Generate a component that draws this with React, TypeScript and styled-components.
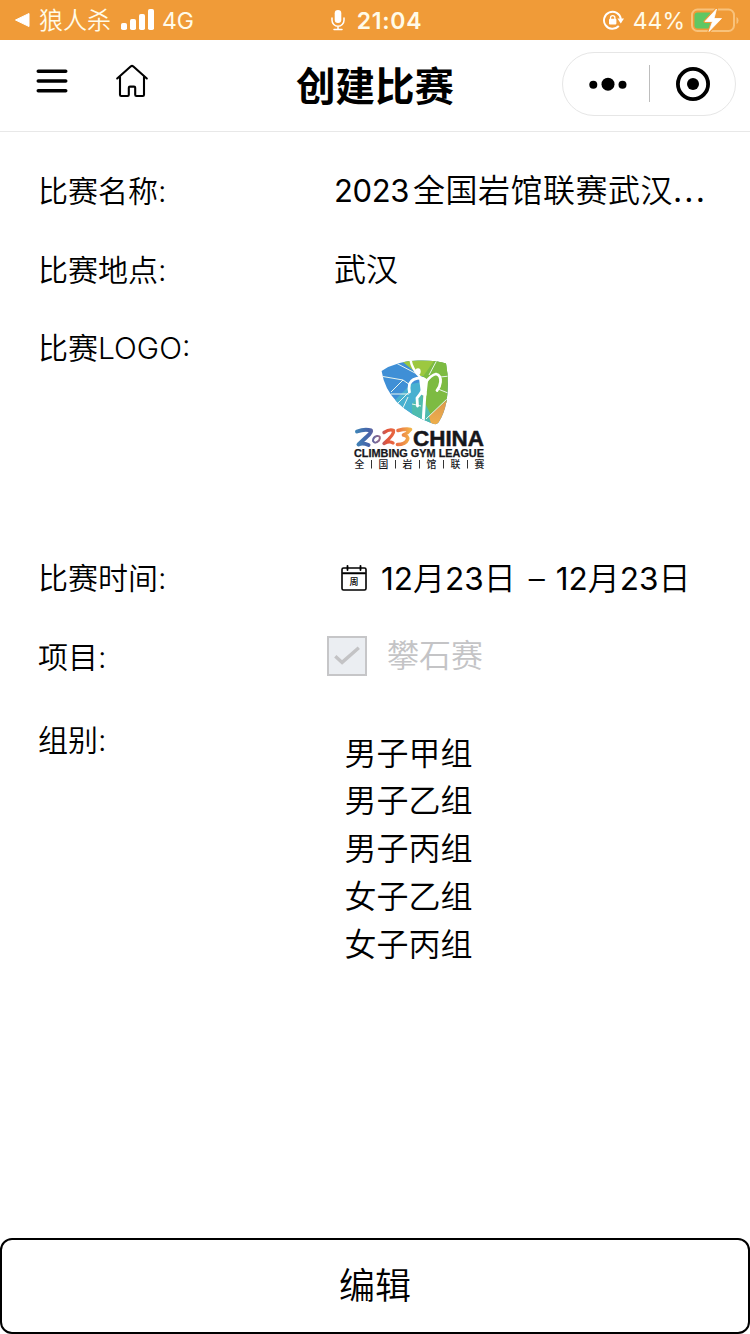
import React from 'react';
import styled, { createGlobalStyle } from 'styled-components';

const GlobalStyle = createGlobalStyle`
  * { box-sizing: border-box; }
  body {
    margin: 0;
    background: #fff;
    color: #000;
    font-family: Inter, "Noto Sans CJK SC", sans-serif;
  }
`;

const Page = styled.div`
  display: flex;
  flex-direction: column;
  width: 750px;
  height: 1334px;
  overflow: hidden;
  background: #fff;
`;

const StatusBar = styled.header`
  display: grid;
  grid-template-columns: 1fr auto 1fr;
  align-items: center;
  height: 40px;
  flex: none;
  padding: 0 11px 0 14px;
  background: #f09b38;
  color: #fff;
  font-size: 23px;
  line-height: 40px;
  white-space: nowrap;
`;

const StatusGroup = styled.div<{ $end?: boolean }>`
  display: flex;
  align-items: center;
  height: 40px;
  justify-content: ${(p) => (p.$end ? 'flex-end' : 'flex-start')};
  svg { display: block; flex: none; }
`;

const StatusText = styled.span<{ $left: number; $size?: number; $weight?: number; $spacing?: number; $drop?: number }>`
  margin-left: ${(p) => p.$left}px;
  padding-top: ${(p) => p.$drop ?? 1}px;
  font-size: ${(p) => p.$size ?? 23}px;
  font-weight: ${(p) => p.$weight ?? 400};
  letter-spacing: ${(p) => p.$spacing ?? 0}px;
  color: #fffbe9;
`;

const Signal = styled.svg`
  margin-left: 10px;
`;

const BatteryIcon = styled.svg`
  margin-left: 6px;
`;

const NavBar = styled.nav`
  display: grid;
  grid-template-columns: 1fr auto 1fr;
  align-items: center;
  flex: none;
  height: 92px;
  padding: 0 14px 4px 36px;
  border-bottom: 1px solid #e8e8e8;
`;

const NavIcons = styled.div`
  display: flex;
  align-items: center;
  gap: 47px;
  padding-bottom: 5px;
  svg { display: block; }
`;

const Title = styled.h1`
  margin: 6px 22px 0 0;
  font-size: 39.5px;
  font-weight: 700;
  line-height: 60px;
`;

const Capsule = styled.div`
  display: flex;
  align-items: center;
  justify-self: end;
  width: 174px;
  height: 64px;
  border: 1px solid #e6e6e6;
  border-radius: 32px;
`;

const CapsuleButton = styled.button<{ $shift?: number }>`
  display: flex;
  width: 86px;
  flex: none;
  align-items: center;
  justify-content: center;
  padding: 0 0 0 ${(p) => p.$shift ?? 0}px;
  border: 0;
  background: none;
`;

const CapsuleDivider = styled.span`
  flex: none;
  width: 1px;
  height: 37px;
  background: #bdbdbd;
`;

const Form = styled.main`
  display: flex;
  flex: 1;
  flex-direction: column;
  padding: 20px 0 0 38px;
`;

const Row = styled.section<{ $height: number; $line?: number }>`
  display: grid;
  grid-template-columns: 289px 1fr;
  grid-template-rows: 100%;
  height: ${(p) => p.$height}px;
  line-height: ${(p) => p.$line ?? p.$height}px;
`;

const Label = styled.span`
  font-size: 30px;
  font-weight: 350;
`;

const Value = styled.div<{ $indent?: number; $lift?: number }>`
  display: flex;
  align-items: center;
  padding: 0 0 ${(p) => p.$lift ?? 0}px ${(p) => p.$indent ?? 7}px;
  font-size: 32px;
  font-weight: 350;
  white-space: nowrap;
`;

const Digits = styled.span`
  margin-right: 4px;
  letter-spacing: -0.4px;
  font-size: 31px;
  font-weight: 400;
`;

const Name = styled.span`
  letter-spacing: 0.5px;
`;

const Ellipsis = styled.span`
  letter-spacing: 2.2px;
  font-weight: 400;
`;

const LogoBox = styled.div`
  padding: 47px 0 0 23px;
  line-height: 0;
`;

const DateText = styled.span<{ $left: number }>`
  margin-left: ${(p) => p.$left}px;
  padding-top: 1px;
`;

const DateNumber = styled.span`
  font-size: 31.5px;
  font-weight: 400;
`;

const CheckBox = styled.span`
  display: flex;
  align-items: center;
  justify-content: center;
  width: 40px;
  height: 40px;
  border: 2px solid #c6c6c8;
  background: #ebeef2;
`;

const CheckText = styled.span`
  margin-left: 20px;
  color: #c4c4c6;
`;

const Groups = styled.ul`
  margin: 0;
  padding: 32.5px 0 0 17.5px;
  list-style: none;
`;

const Group = styled.li`
  height: 47.8px;
  font-size: 32px;
  font-weight: 350;
  line-height: 48px;
`;

const EditButton = styled.button`
  flex: none;
  height: 96px;
  padding: 0;
  border: 2px solid #000;
  border-radius: 12px;
  background: #fff;
  color: #000;
  font: 350 36px/92px Inter, "Noto Sans CJK SC", sans-serif;
`;

const BackArrow = () => (
  <svg width="16" height="16" viewBox="0 0 16 16">
    <path d="M1.5 8 15 1.5v13Z" fill="#fff" stroke="#fff" strokeLinejoin="round" />
  </svg>
);

const SignalBars = () => (
  <Signal width="33" height="22" viewBox="0 0 33 22">
    <g fill="#fff">
      <rect x="0" y="14" width="6" height="7" rx="1.8" />
      <rect x="9" y="10" width="6" height="11" rx="1.8" />
      <rect x="18" y="5" width="6" height="16" rx="1.8" />
      <rect x="27" y="0" width="6" height="21" rx="1.8" />
    </g>
  </Signal>
);

const Microphone = () => (
  <svg width="14" height="22" viewBox="0 0 14 22" fill="none" stroke="#fff" strokeWidth="1.5" strokeLinecap="round">
    <rect x="3.7" y="1" width="6.6" height="13" rx="3.3" fill="#fff" stroke="none" />
    <path d="M1 9v2.3a6 6 0 0 0 12 0V9M7 17.4v3M3 20.6h8" />
  </svg>
);

const RotationLock = () => (
  <svg width="21" height="20" viewBox="0 0 21 20" fill="none" stroke="#fff" strokeWidth="1.9">
    <path d="M15.8 16A8.5 8.5 0 1 1 17.9 9" />
    <path d="M14.4 8.6h6.6l-3.2 4.8Z" fill="#fff" stroke="none" />
    <rect x="6" y="8.8" width="7.4" height="5.8" rx="1" fill="#fff" stroke="none" />
    <path d="M7.5 9.5V7.8a2.2 2.2 0 0 1 4.4 0v1.7" strokeWidth="1.3" />
  </svg>
);

const Battery = () => (
  <BatteryIcon width="48" height="26" viewBox="0 0 48 26">
    <rect x="1" y="2.5" width="42" height="21.5" rx="5.5" fill="none" stroke="#f8c27b" strokeWidth="2" />
    <path d="M45.5 10q2 .8 2 3.5t-2 3.5Z" fill="#f8c27b" />
    <path d="M6.5 5.5H19v16H6.5q-3 0-3-3v-10q0-3 3-3Z" fill="#5fc763" />
    <path d="M25.5 2 14 14.5h7.5L18 24.5 30.5 11.500H23Z" fill="#fff" stroke="#f09b38" strokeWidth="3" strokeLinejoin="round" />
    <path d="M25.5 2 14 14.5h7.5L18 24.5 30.5 11.500H23Z" fill="#fff" stroke="#fff" strokeWidth=".8" strokeLinejoin="round" />
  </BatteryIcon>
);

const MenuIcon = () => (
  <svg width="32" height="26" viewBox="0 0 32 26" stroke="#000" strokeWidth="3.6" strokeLinecap="round">
    <path d="M2.3 3.3h27.4M2.3 13h27.4M2.3 22.7h27.4" />
  </svg>
);

const HomeIcon = () => (
  <svg width="34" height="34" viewBox="0 0 34 34" fill="none" stroke="#000" strokeWidth="2.1" strokeLinecap="round" strokeLinejoin="round">
    <path d="M2.2 14.5 15.9 2.3q1.1-.8 2.2 0l13.7 12.2" />
    <path d="M5 13v17.8q0 1.2 1.2 1.2h6.4q1.2 0 1.2-1.2v-7q0-1.2 1.2-1.2h4q1.2 0 1.2 1.2v7q0 1.2 1.2 1.2h6.4q1.2 0 1.2-1.2V13" />
  </svg>
);

const MoreIcon = () => (
  <svg width="38" height="14" viewBox="0 0 38 14">
    <circle cx="4.3" cy="7.8" r="4" />
    <circle cx="19" cy="7.2" r="6.5" />
    <circle cx="33.5" cy="7.8" r="4" />
  </svg>
);

const CloseIcon = () => (
  <svg width="34" height="34" viewBox="0 0 34 34">
    <circle cx="17" cy="17" r="15.1" fill="none" stroke="#000" strokeWidth="3.8" />
    <circle cx="17" cy="17" r="6" />
  </svg>
);

const CalendarIcon = () => (
  <svg width="28" height="28" viewBox="0 0 28 28" fill="none" stroke="#000" strokeWidth="1.6" strokeLinecap="round">
    <rect x="2" y="4" width="24" height="22" rx="1.5" />
    <path d="M3 9.3h22" strokeWidth="2" />
    <path d="M7.5 1.8v4.2M20.5 1.8v4.2" strokeWidth="1.8" />
    <text x="14" y="20.6" textAnchor="middle" fontSize="9" fontWeight="500" fill="#000" stroke="none">周</text>
  </svg>
);

const CheckIcon = () => (
  <svg width="26" height="20" viewBox="0 0 26 20" fill="none" stroke="#c3c3c5" strokeWidth="3.4">
    <path d="m1.3 10.2 6.8 6.2L24.8 1.8" />
  </svg>
);

const LeagueLogo = () => (
  <svg width="140" height="118" viewBox="350 356 140 118">
    <defs>
      <clipPath id="shield">
        <path d="M381.6 371Q396 361 418 360.5q18-.5 28 3 3.500 19 .5 38-2.500 13-8 21-2 2.500-5.500 1.200Q387 407 381.600 371Z" />
      </clipPath>
      <linearGradient id="tail" x1="0" y1="0" x2="0" y2="1">
        <stop offset="0" stopColor="#d9964e" />
        <stop offset="1" stopColor="#f2b24a" />
      </linearGradient>
      <linearGradient id="year" x1="355" y1="0" x2="411" y2="0" gradientUnits="userSpaceOnUse">
        <stop offset="0" stopColor="#3f86b8" />
        <stop offset=".25" stopColor="#4763a8" />
        <stop offset=".42" stopColor="#8b6a91" />
        <stop offset=".56" stopColor="#e1543c" />
        <stop offset=".76" stopColor="#ea7044" />
        <stop offset="1" stopColor="#f3b54a" />
      </linearGradient>
    </defs>
    <g clipPath="url(#shield)">
      <path d="M380 358h70v70h-70Z" fill="#3f8fd6" />
      <path d="m398 358 52-2v24l-30-4Z" fill="#9cc840" />
      <path d="m422 378 14-20h14v42l-22 18-6-12Z" fill="#7dbb42" />
      <path d="m393 402 18-18 11-2 2 44Z" fill="#48b0d0" />
      <path d="m412 404 9-9 9 18 1 12-19-6Z" fill="#4fbcae" />
      <path d="m429 416 20-18v30l-18-4Z" fill="url(#tail)" />
      <g fill="none" stroke="#e9f5ee" strokeWidth="1">
        <path d="m396 363 19 10M403 380l-12 12M380 376l23 4 7 5M391 394h18M409 392l-17 17M408 397l-6 13M412 404l9 2M437 360l-8 15M440 377l10-1M438 389l10 4M426 419l22-21" />
      </g>
      <g fill="none" stroke="#fff" strokeLinecap="round" strokeLinejoin="round">
        <path d="M410.500 360q1.500 9 9.500 17" strokeWidth="2.400" />
        <path d="M421 378q-9 0-11.500 6-1 5 0 8" strokeWidth="2.800" />
        <path d="M426 382q5-7 10-8 5 1 4.500 8-.500 5-3.500 8.500" strokeWidth="2.800" />
        <path d="M420 378q4-1 7 3l-1.500 14-3.500-1Z" fill="#fff" strokeWidth="2" />
        <path d="M422 391q-3 5-5 7l.500 8" strokeWidth="2.800" />
        <path d="M425 393q-1 14-2 32" strokeWidth="3" />
      </g>
      <ellipse cx="418" cy="371.500" rx="2.700" ry="3.300" fill="#fff" />
    </g>
    <g fill="none" stroke="url(#year)" strokeLinecap="round" strokeLinejoin="round">
      <path d="M357 431.500q8-3 14-1 1 2-4.500 6.500l-8 7.500q4-2 10 .500" strokeWidth="4" />
      <path d="M377 436q-4 1-4 5 2 3.500 6-.500 2.500-5-2-4.500" strokeWidth="2" />
      <path d="M384 432.500q6-4 9.500-2 1 4-9.500 13 6-3 9-.500" strokeWidth="3.400" />
      <path d="M398 430.500q8-2 12.500-1-3 4-7 5.500 5 1 4 4.500-2 5-10 5" strokeWidth="3.600" />
    </g>
    <g fill="#17171b" fontFamily='"Liberation Sans", Arial, sans-serif'>
      <text x="413" y="445.600" fontSize="21.800" fontWeight="700" textLength="71" lengthAdjust="spacingAndGlyphs" stroke="#17171b" strokeWidth=".5">CHINA</text>
      <text x="354" y="457.200" fontSize="10.300" fontWeight="700" textLength="130" lengthAdjust="spacingAndGlyphs" stroke="#17171b" strokeWidth=".25">CLIMBING GYM LEAGUE</text>
    </g>
    <g fill="#17171b" fontSize="9.800" fontWeight="500" fontFamily='"Liberation Sans", "Noto Sans CJK SC", sans-serif' textAnchor="middle">
      {['全', '国', '岩', '馆', '联', '赛'].map((c, i) => (
        <text key={c} x={359.3 + i * 24} y="468.400">{c}</text>
      ))}
    </g>
    <path d="M371.500 460v8.500M395.500 460v8.500M419.500 460v8.500M443.500 460v8.500M467.500 460v8.500" stroke="#333" strokeWidth="1" />
  </svg>
);

const DayLabel = ({ month, day }: { month: number; day: number }) => (
  <>
    <DateNumber>{month}</DateNumber>月<DateNumber>{day}</DateNumber>日
  </>
);

const groups = ['男子甲组', '男子乙组', '男子丙组', '女子乙组', '女子丙组'];

export default function App() {
  return (
    <>
      <GlobalStyle />
      <Page>
        <StatusBar>
          <StatusGroup>
            <BackArrow />
            <StatusText $left={9} $size={24} $drop={2} $weight={350}>狼人杀</StatusText>
            <SignalBars />
            <StatusText $left={8}>4G</StatusText>
          </StatusGroup>
          <StatusGroup>
            <Microphone />
            <StatusText $left={12} $weight={600} $spacing={0.7}>21:04</StatusText>
          </StatusGroup>
          <StatusGroup $end>
            <RotationLock />
            <StatusText $left={9}>44%</StatusText>
            <Battery />
          </StatusGroup>
        </StatusBar>
        <NavBar>
          <NavIcons>
            <MenuIcon />
            <HomeIcon />
          </NavIcons>
          <Title>创建比赛</Title>
          <Capsule>
            <CapsuleButton $shift={4} aria-label="更多"><MoreIcon /></CapsuleButton>
            <CapsuleDivider />
            <CapsuleButton aria-label="关闭"><CloseIcon /></CapsuleButton>
          </Capsule>
        </NavBar>
        <Form>
          <Row $height={79}>
            <Label>比赛名称:</Label>
            <Value $lift={2}><Digits>2023</Digits><Name>全国岩馆联赛武汉</Name><Ellipsis>...</Ellipsis></Value>
          </Row>
          <Row $height={78}>
            <Label>比赛地点:</Label>
            <Value>武汉</Value>
          </Row>
          <Row $height={230} $line={78}>
            <Label>比赛LOGO:</Label>
            <LogoBox><LeagueLogo /></LogoBox>
          </Row>
          <Row $height={78}>
            <Label>比赛时间:</Label>
            <Value $indent={13}>
              <CalendarIcon />
              <DateText $left={13}><DayLabel month={12} day={23} /></DateText>
              <DateText $left={13}>–</DateText>
              <DateText $left={11}><DayLabel month={12} day={23} /></DateText>
            </Value>
          </Row>
          <Row $height={80}>
            <Label>项目:</Label>
            <Value $indent={0} $lift={2}>
              <CheckBox><CheckIcon /></CheckBox>
              <CheckText>攀石赛</CheckText>
            </Value>
          </Row>
          <Row $height={290} $line={86}>
            <Label>组别:</Label>
            <Groups>
              {groups.map((g) => <Group key={g}>{g}</Group>)}
            </Groups>
          </Row>
        </Form>
        <EditButton>编辑</EditButton>
      </Page>
    </>
  );
}
